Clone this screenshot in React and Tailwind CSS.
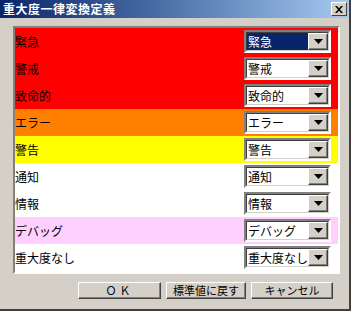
import React from 'react'

const ROWS = [
  { label: '緊急', bg: 'bg-[#ff0000]', selected: true },
  { label: '警戒', bg: 'bg-[#ff0000]' },
  { label: '致命的', bg: 'bg-[#ff0000]' },
  { label: 'エラー', bg: 'bg-[#ff8000]' },
  { label: '警告', bg: 'bg-[#ffff00]' },
  { label: '通知', bg: 'bg-white' },
  { label: '情報', bg: 'bg-white' },
  { label: 'デバッグ', bg: 'bg-[#ffd0ff]' },
  { label: '重大度なし', bg: 'bg-white' },
]

const font = { fontFamily: '"MS UI Gothic", "Noto Sans CJK JP", sans-serif' }

function Arrow() {
  return (
    <div className="w-[20px] h-full bg-[#d4d0c8] border border-t-white border-l-white border-r-[#404040] border-b-[#404040] flex items-center justify-center shadow-[inset_-1px_-1px_0_#808080]">
      <svg width="9" height="5" viewBox="0 0 9 5">
        <path d="M0 0h9l-4.5 5z" fill="#000" />
      </svg>
    </div>
  )
}

function Combo({ value, selected }) {
  return (
    <div className="w-[87px] h-[23px] mr-[7px] flex border-2 border-t-[#808080] border-l-[#808080] border-r-white border-b-white bg-white">
      <div className="flex-1 flex border border-t-[#404040] border-l-[#404040] border-r-[#d4d0c8] border-b-[#d4d0c8]">
        <div className={`flex-1 flex items-center pl-[1px] text-[12px] leading-none whitespace-nowrap overflow-hidden ${selected ? 'bg-[#0a246a] text-white' : 'text-black'}`}>
          {value}
        </div>
        <Arrow />
      </div>
    </div>
  )
}

function Btn({ children, className = '' }) {
  return (
    <div className={`h-[17px] bg-[#d4d0c8] border border-t-white border-l-white border-r-[#404040] border-b-[#404040] shadow-[inset_-1px_-1px_0_#808080] flex items-center justify-center text-[11px] text-black leading-none ${className}`}>
      {children}
    </div>
  )
}

export default function App() {
  return (
    <div className="w-[355px] h-[313px] bg-white" style={font}>
      <div className="w-[351px] h-[311px] bg-[#d4d0c8] flex flex-col border-r-2 border-b-2 border-r-[#404040] border-b-[#404040]">
        {/* title bar */}
        <div className="h-[18px] bg-gradient-to-r from-[#0a246a] to-[#a6caf0] flex items-center justify-between pl-[3px] pr-[2px]">
          <span className="text-white font-bold text-[12px] leading-none tracking-[0.5px]">重大度一律変換定義</span>
          <div className="w-[16px] h-[14px] bg-[#d4d0c8] border border-t-white border-l-white border-r-[#404040] border-b-[#404040] flex items-center justify-center">
            <svg width="8" height="7" viewBox="0 0 8 7">
              <path d="M0 0h2l2 2.2L6 0h2L5 3.5 8 7H6L4 4.8 2 7H0l3-3.5z" fill="#000" />
            </svg>
          </div>
        </div>

        {/* list panel */}
        <div className="mt-[8px] ml-[13px] w-[327px] h-[248px] border-2 border-t-[#808080] border-l-[#808080] border-r-white border-b-white bg-white">
          <div className="flex flex-col">
            {ROWS.map(r => (
              <div key={r.label} className={`h-[27px] flex items-center justify-between ${r.bg}`}>
                <span className="text-[12px] text-black leading-none">{r.label}</span>
                <Combo value={r.label} selected={r.selected} />
              </div>
            ))}
          </div>
        </div>

        {/* buttons */}
        <div className="mt-[8px] flex justify-end gap-[5px] pr-[16px]">
          <Btn className="w-[83px] tracking-[3px] text-[10px]">ＯＫ</Btn>
          <Btn className="w-[80px]">標準値に戻す</Btn>
          <Btn className="w-[82px]">キャンセル</Btn>
        </div>
      </div>
    </div>
  )
}
